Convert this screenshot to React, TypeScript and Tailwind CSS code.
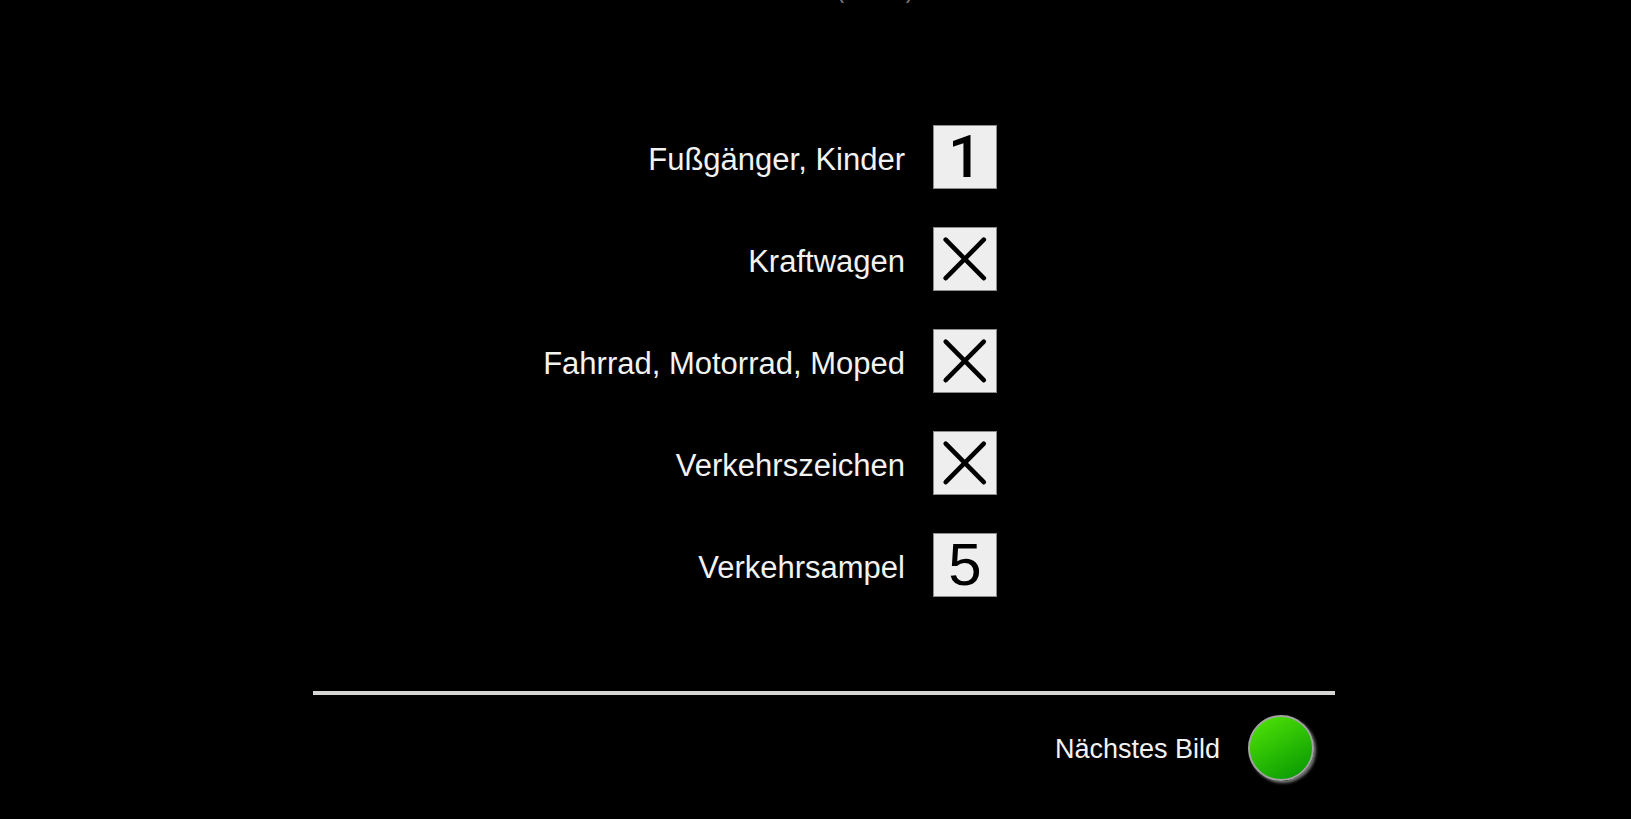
import { useState } from "react";

type Mark = "1" | "5" | "x";

type Row = { id: string; label: string; mark: Mark };

const rows: Row[] = [
  { id: "fussgaenger", label: "Fußgänger, Kinder", mark: "1" },
  { id: "kraftwagen", label: "Kraftwagen", mark: "x" },
  { id: "zweirad", label: "Fahrrad, Motorrad, Moped", mark: "x" },
  { id: "verkehrszeichen", label: "Verkehrszeichen", mark: "x" },
  { id: "verkehrsampel", label: "Verkehrsampel", mark: "5" },
];

function Cross() {
  return (
    <svg viewBox="0 0 64 64" className="size-full" fill="none" stroke="#000" strokeWidth="4.6" strokeLinecap="round" aria-hidden="true">
      <path d="M12.7 12.7 50.8 51.2M50.8 12.7 12.7 51.2" />
    </svg>
  );
}

function MarkBox({ id, mark }: { id: string; mark: Mark }) {
  const [on, setOn] = useState(true);
  return (
    <button
      id={id}
      type="button"
      aria-pressed={on}
      onClick={() => setOn(!on)}
      className="flex size-16 items-center justify-center bg-[#eeeeee] text-black outline-1 -outline-offset-1 outline-[#8c8c8c]"
    >
      {on && mark === "x" && <Cross />}
      {on && mark === "1" && <span className="font-['Roboto',sans-serif] text-[60px] leading-[60px] font-medium">1</span>}
      {on && mark === "5" && <span className="text-[60px] leading-[60px]">5</span>}
    </button>
  );
}

export default function App() {
  return (
    <main className="min-h-screen bg-black pl-[17px] font-['Liberation_Sans',Arial,sans-serif] text-[#f2f2f2]">
      <div className="mx-auto max-w-[1022px]">
        <div className="flex h-[3px] items-end justify-center gap-[60px] overflow-hidden pl-[102px] text-[24px] leading-[24px] text-[#777777]">
          <span>(</span>
          <span>)</span>
        </div>
        <div className="mt-[122px] grid grid-cols-[592px_auto] items-center justify-start gap-x-7 gap-y-[38px]">
          {rows.map((row) => (
            <div key={row.id} className="contents">
              <label htmlFor={row.id} className="pt-1.5 text-right text-[31px] leading-9">
                {row.label}
              </label>
              <MarkBox id={row.id} mark={row.mark} />
            </div>
          ))}
        </div>
        <hr className="mt-[94px] h-1 border-0 bg-[#d6d6d4]" />
        <div className="mt-5 flex items-center justify-end gap-7 pr-[21px]">
          <label htmlFor="next" className="pt-0.5 text-[27px] leading-8">
            Nächstes Bild
          </label>
          <button
            id="next"
            type="button"
            className="size-[66px] rounded-full border-2 border-[#a3a3a3] bg-linear-[150deg] from-[#55e808] to-[#009200] bg-origin-border shadow-[2px_2px_3px_#777777]"
          />
        </div>
      </div>
    </main>
  );
}
